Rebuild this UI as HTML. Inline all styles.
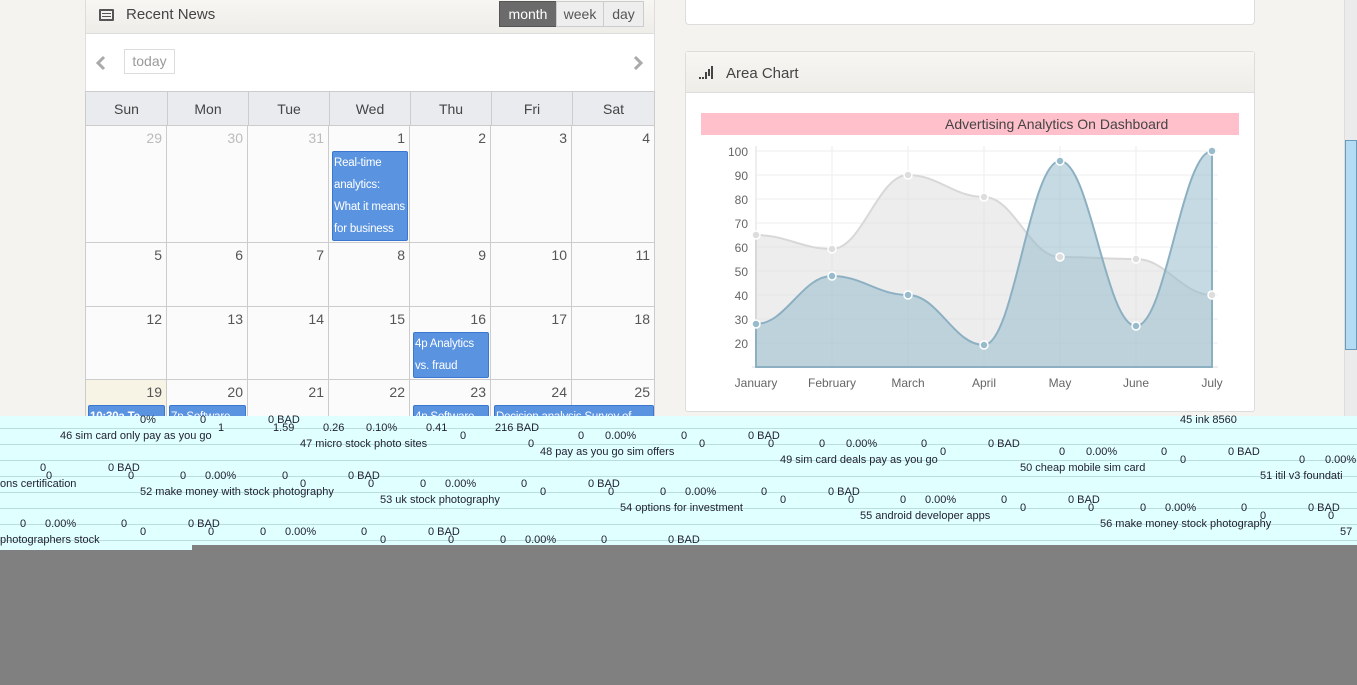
<!DOCTYPE html>
<html><head><meta charset="utf-8"><style>
*{box-sizing:border-box;margin:0;padding:0}
body{width:1357px;height:685px;overflow:hidden;background:#f5f3ef;font-family:"Liberation Sans",sans-serif;position:relative}
.a{position:absolute}
.cal{left:85px;top:-5px;width:570px;height:430px;background:#fff;border:1px solid #ddd}
.hdr{background:linear-gradient(#f7f6f3,#efede8);border-bottom:1px solid #ddd}
.btn{top:1px;height:26px;font-size:14px;color:#555;text-align:center;line-height:24px;border:1px solid #ccc;background:#eee}
.dh{top:91px;height:35px;background:#e9ebee;border-top:1px solid #ccc;border-bottom:1px solid #ccc;border-left:1px solid #ccc;font-size:14px;color:#444;text-align:center;line-height:34px}
.cell{border-right:1px solid #ccc;border-bottom:1px solid #ccc;background:#fbfbfb;font-size:14px;color:#555;text-align:right;padding:4px 4px 0 0}
.ev{background:#5a93e0;color:#fff;font-size:11.5px;letter-spacing:-0.2px;line-height:22px;border-radius:2px;padding-left:1px;overflow:hidden;border:1px solid #3a78d0}
.t{position:absolute;font-size:11px;color:#223;white-space:nowrap;line-height:12px}
.ln{position:absolute;height:1px;background:#b8dede}
</style></head><body>
<div class="a" style="left:685px;top:-5px;width:570px;height:30px;background:#fff;border:1px solid #ddd;border-radius:4px"></div>

<div class="a cal"></div>
<div class="a hdr" style="left:86px;top:0;width:568px;height:34px"></div>
<div class="a" style="left:99px;top:9px;width:15px;height:12px;border:2px solid #555;border-radius:1px"></div>
<div class="a" style="left:102px;top:13px;width:9px;height:1px;background:#555;box-shadow:0 3px 0 #555"></div>
<div class="a" style="left:126px;top:6px;font-size:15px;color:#444">Recent News</div>
<div class="a btn" style="left:499px;width:58px;background:#6b6b6b;color:#fff;border-color:#555">month</div>
<div class="a btn" style="left:556px;width:48px">week</div>
<div class="a btn" style="left:603px;width:41px">day</div>
<svg class="a" style="left:94px;top:55px" width="14" height="16"><path d="M10,2 L4,8 L10,14" fill="none" stroke="#aaa" stroke-width="3"/></svg>
<svg class="a" style="left:631px;top:55px" width="14" height="16"><path d="M4,2 L10,8 L4,14" fill="none" stroke="#aaa" stroke-width="3"/></svg>
<div class="a" style="left:124px;top:49px;width:51px;height:25px;border:1px solid #ddd;font-size:14px;color:#999;text-align:center;line-height:23px">today</div>

<div class="a dh" style="left:85px;width:82px">Sun</div>
<div class="a dh" style="left:167px;width:81px">Mon</div>
<div class="a dh" style="left:248px;width:81px">Tue</div>
<div class="a dh" style="left:329px;width:81px">Wed</div>
<div class="a dh" style="left:410px;width:81px">Thu</div>
<div class="a dh" style="left:491px;width:81px">Fri</div>
<div class="a dh" style="left:572px;width:83px;border-right:1px solid #ccc">Sat</div>

<div id="grid"></div>
<script>
var xs=[85,167,248,329,410,491,572,655],ys=[126,243,307,380,440];
var d=[[29,30,31,1,2,3,4],[5,6,7,8,9,10,11],[12,13,14,15,16,17,18],[19,20,21,22,23,24,25]];
var h='';
for(var r=0;r<4;r++)for(var c=0;c<7;c++){
var col=(r==0&&c<3)?'color:#bbb;':'';var bg=(r==3&&c==0)?'background:#f7f4e6;':'';
h+='<div class="a cell" style="left:'+xs[c]+'px;top:'+ys[r]+'px;width:'+(xs[c+1]-xs[c])+'px;height:'+(ys[r+1]-ys[r])+'px;'+col+bg+(c==0?'border-left:1px solid #ccc;':'')+'">'+d[r][c]+'</div>';}
document.getElementById('grid').innerHTML=h;
</script>
<div class="a ev" style="left:332px;top:151px;width:76px;height:90px">Real-time analytics: What&nbsp;it&nbsp;means for business</div>
<div class="a ev" style="left:413px;top:332px;width:76px;height:46px">4p Analytics vs. fraud</div>
<div class="a ev" style="left:88px;top:405px;width:77px;height:20px;font-weight:bold">10:30a Te</div>
<div class="a ev" style="left:169px;top:405px;width:77px;height:20px">7p Software</div>
<div class="a ev" style="left:413px;top:405px;width:76px;height:20px">4p Software</div>
<div class="a ev" style="left:494px;top:405px;width:160px;height:20px">Decision analysis Survey of</div>

<div class="a" style="left:685px;top:51px;width:570px;height:361px;background:#fff;border:1px solid #ddd;border-radius:3px"></div>
<div class="a hdr" style="left:686px;top:52px;width:568px;height:41px"></div>
<div class="a" style="left:699px;top:77px;width:2px;height:2px;background:#444;box-shadow:3px 0 0 #444"></div>
<div class="a" style="left:705px;top:72px;width:2px;height:7px;background:#444;box-shadow:3px -3px 0 #444"></div>
<div class="a" style="left:711px;top:66px;width:2px;height:13px;background:#444"></div>
<div class="a" style="left:726px;top:65px;font-size:15px;color:#444">Area Chart</div>
<div class="a" style="left:701px;top:113px;width:538px;height:22px;background:#ffc0cb;font-size:14px;color:#444;line-height:22px;padding-left:244px">Advertising Analytics On Dashboard</div>
<svg class="a" style="left:0;top:0" width="1357" height="420">
<g stroke="#eee" stroke-width="1">
<line x1="756" y1="151" x2="1218" y2="151"/><line x1="756" y1="175" x2="1218" y2="175"/><line x1="756" y1="199" x2="1218" y2="199"/><line x1="756" y1="223" x2="1218" y2="223"/><line x1="756" y1="247" x2="1218" y2="247"/><line x1="756" y1="271" x2="1218" y2="271"/><line x1="756" y1="295" x2="1218" y2="295"/><line x1="756" y1="319" x2="1218" y2="319"/><line x1="756" y1="343" x2="1218" y2="343"/>
<line x1="832" y1="146" x2="832" y2="367"/><line x1="908" y1="146" x2="908" y2="367"/><line x1="984" y1="146" x2="984" y2="367"/><line x1="1060" y1="146" x2="1060" y2="367"/><line x1="1136" y1="146" x2="1136" y2="367"/><line x1="1212" y1="146" x2="1212" y2="367"/>
</g>
<line x1="756" y1="146" x2="756" y2="367" stroke="#ddd"/><line x1="752" y1="367" x2="1218" y2="367" stroke="#ddd"/>
<path d="M756,235 C786,235 802,249 832,249 C862,249 878,175 908,175 C938,175 954,197 984,197 C1014,197 1030,257 1060,257 C1090,257 1106,259 1136,259 C1166,259 1182,295 1212,295 L1212,367 L756,367Z" fill="rgba(220,220,220,0.5)" stroke="#d8d8d8" stroke-width="2"/>
<path d="M756,324 C786,324 802,276 832,276 C862,276 878,295 908,295 C938,295 954,345 984,345 C1014,345 1030,161 1060,161 C1090,161 1106,326 1136,326 C1166,326 1182,151 1212,151 L1212,367 L756,367Z" fill="rgba(151,187,205,0.55)" stroke="#8cb0c2" stroke-width="2"/>
<g fill="#ddd" stroke="#fff" stroke-width="1.5"><circle cx="756" cy="235" r="4"/><circle cx="832" cy="249" r="4"/><circle cx="908" cy="175" r="4"/><circle cx="984" cy="197" r="4"/><circle cx="1060" cy="257" r="4"/><circle cx="1136" cy="259" r="4"/><circle cx="1212" cy="295" r="4"/></g>
<g fill="#97bbcd" stroke="#fff" stroke-width="1.5"><circle cx="756" cy="324" r="4"/><circle cx="832" cy="276" r="4"/><circle cx="908" cy="295" r="4"/><circle cx="984" cy="345" r="4"/><circle cx="1060" cy="161" r="4"/><circle cx="1136" cy="326" r="4"/><circle cx="1212" cy="151" r="4"/></g>
<g font-family="Liberation Sans" font-size="12" fill="#666" text-anchor="end">
<text x="748" y="156">100</text><text x="748" y="180">90</text><text x="748" y="204">80</text><text x="748" y="228">70</text><text x="748" y="252">60</text><text x="748" y="276">50</text><text x="748" y="300">40</text><text x="748" y="324">30</text><text x="748" y="348">20</text></g>
<g font-family="Liberation Sans" font-size="12" fill="#666" text-anchor="middle">
<text x="756" y="387">January</text><text x="832" y="387">February</text><text x="908" y="387">March</text><text x="984" y="387">April</text><text x="1060" y="387">May</text><text x="1136" y="387">June</text><text x="1212" y="387">July</text></g>
</svg>

<div class="a" style="left:1344px;top:0;width:13px;height:420px;background:#ebebeb;border-left:1px solid #ddd"></div>
<div class="a" style="left:1345px;top:140px;width:12px;height:210px;background:#b3dbf3;border:1px solid #6a9ab8"></div>

<div class="a" style="left:0;top:416px;width:1357px;height:129px;background:#e0ffff"></div>
<div class="a" style="left:0;top:545px;width:192px;height:5px;background:#e0ffff"></div>
<div class="a" style="left:0;top:545px;width:1357px;height:140px;background:#808080;clip-path:polygon(192px 0,1357px 0,1357px 140px,0 140px,0 5px,192px 5px)"></div>
<div class="ln" style="left:0;top:428px;width:1357px"></div><div class="ln" style="left:0;top:444px;width:1357px"></div><div class="ln" style="left:0;top:460px;width:1357px"></div><div class="ln" style="left:0;top:476px;width:1357px"></div><div class="ln" style="left:0;top:492px;width:1357px"></div><div class="ln" style="left:0;top:508px;width:1357px"></div><div class="ln" style="left:0;top:524px;width:1357px"></div><div class="ln" style="left:0;top:540px;width:1357px"></div>
<div class="t" style="left:140px;top:414px">0%</div><div class="t" style="left:200px;top:414px">0</div><div class="t" style="left:268px;top:414px">0 BAD</div><div class="t" style="left:1180px;top:414px">45 ink 8560</div>
<div class="t" style="left:218px;top:422px">1</div><div class="t" style="left:273px;top:422px">1.59</div><div class="t" style="left:323px;top:422px">0.26</div><div class="t" style="left:366px;top:422px">0.10%</div><div class="t" style="left:426px;top:422px">0.41</div><div class="t" style="left:495px;top:422px">216 BAD</div>
<div class="t" style="left:60px;top:430px">46 sim card only pay as you go</div><div class="t" style="left:460px;top:430px">0</div><div class="t" style="left:578px;top:430px">0</div><div class="t" style="left:605px;top:430px">0.00%</div><div class="t" style="left:681px;top:430px">0</div><div class="t" style="left:748px;top:430px">0 BAD</div>
<div class="t" style="left:300px;top:438px">47 micro stock photo sites</div><div class="t" style="left:528px;top:438px">0</div><div class="t" style="left:699px;top:438px">0</div><div class="t" style="left:768px;top:438px">0</div><div class="t" style="left:819px;top:438px">0</div><div class="t" style="left:846px;top:438px">0.00%</div><div class="t" style="left:921px;top:438px">0</div><div class="t" style="left:988px;top:438px">0 BAD</div>
<div class="t" style="left:540px;top:446px">48 pay as you go sim offers</div><div class="t" style="left:940px;top:446px">0</div><div class="t" style="left:1059px;top:446px">0</div><div class="t" style="left:1086px;top:446px">0.00%</div><div class="t" style="left:1161px;top:446px">0</div><div class="t" style="left:1228px;top:446px">0 BAD</div>
<div class="t" style="left:780px;top:454px">49 sim card deals pay as you go</div><div class="t" style="left:1180px;top:454px">0</div><div class="t" style="left:1299px;top:454px">0</div><div class="t" style="left:1325px;top:454px">0.00%</div>
<div class="t" style="left:40px;top:462px">0</div><div class="t" style="left:108px;top:462px">0 BAD</div><div class="t" style="left:1020px;top:462px">50 cheap mobile sim card</div>
<div class="t" style="left:46px;top:470px">0</div><div class="t" style="left:128px;top:470px">0</div><div class="t" style="left:180px;top:470px">0</div><div class="t" style="left:205px;top:470px">0.00%</div><div class="t" style="left:282px;top:470px">0</div><div class="t" style="left:348px;top:470px">0 BAD</div><div class="t" style="left:1260px;top:470px">51 itil v3 foundati</div>
<div class="t" style="left:0;top:478px">ons certification</div><div class="t" style="left:300px;top:478px">0</div><div class="t" style="left:368px;top:478px">0</div><div class="t" style="left:420px;top:478px">0</div><div class="t" style="left:445px;top:478px">0.00%</div><div class="t" style="left:521px;top:478px">0</div><div class="t" style="left:588px;top:478px">0 BAD</div>
<div class="t" style="left:140px;top:486px">52 make money with stock photography</div><div class="t" style="left:540px;top:486px">0</div><div class="t" style="left:608px;top:486px">0</div><div class="t" style="left:660px;top:486px">0</div><div class="t" style="left:685px;top:486px">0.00%</div><div class="t" style="left:761px;top:486px">0</div><div class="t" style="left:828px;top:486px">0 BAD</div>
<div class="t" style="left:380px;top:494px">53 uk stock photography</div><div class="t" style="left:780px;top:494px">0</div><div class="t" style="left:848px;top:494px">0</div><div class="t" style="left:900px;top:494px">0</div><div class="t" style="left:925px;top:494px">0.00%</div><div class="t" style="left:1001px;top:494px">0</div><div class="t" style="left:1068px;top:494px">0 BAD</div>
<div class="t" style="left:620px;top:502px">54 options for investment</div><div class="t" style="left:1020px;top:502px">0</div><div class="t" style="left:1088px;top:502px">0</div><div class="t" style="left:1140px;top:502px">0</div><div class="t" style="left:1165px;top:502px">0.00%</div><div class="t" style="left:1241px;top:502px">0</div><div class="t" style="left:1308px;top:502px">0 BAD</div>
<div class="t" style="left:860px;top:510px">55 android developer apps</div><div class="t" style="left:1260px;top:510px">0</div><div class="t" style="left:1328px;top:510px">0</div>
<div class="t" style="left:20px;top:518px">0</div><div class="t" style="left:45px;top:518px">0.00%</div><div class="t" style="left:121px;top:518px">0</div><div class="t" style="left:188px;top:518px">0 BAD</div><div class="t" style="left:1100px;top:518px">56 make money stock photography</div>
<div class="t" style="left:140px;top:526px">0</div><div class="t" style="left:208px;top:526px">0</div><div class="t" style="left:260px;top:526px">0</div><div class="t" style="left:285px;top:526px">0.00%</div><div class="t" style="left:361px;top:526px">0</div><div class="t" style="left:428px;top:526px">0 BAD</div><div class="t" style="left:1340px;top:526px">57</div>
<div class="t" style="left:0;top:534px">photographers stock</div><div class="t" style="left:380px;top:534px">0</div><div class="t" style="left:448px;top:534px">0</div><div class="t" style="left:500px;top:534px">0</div><div class="t" style="left:525px;top:534px">0.00%</div><div class="t" style="left:601px;top:534px">0</div><div class="t" style="left:668px;top:534px">0 BAD</div>
</body></html>
